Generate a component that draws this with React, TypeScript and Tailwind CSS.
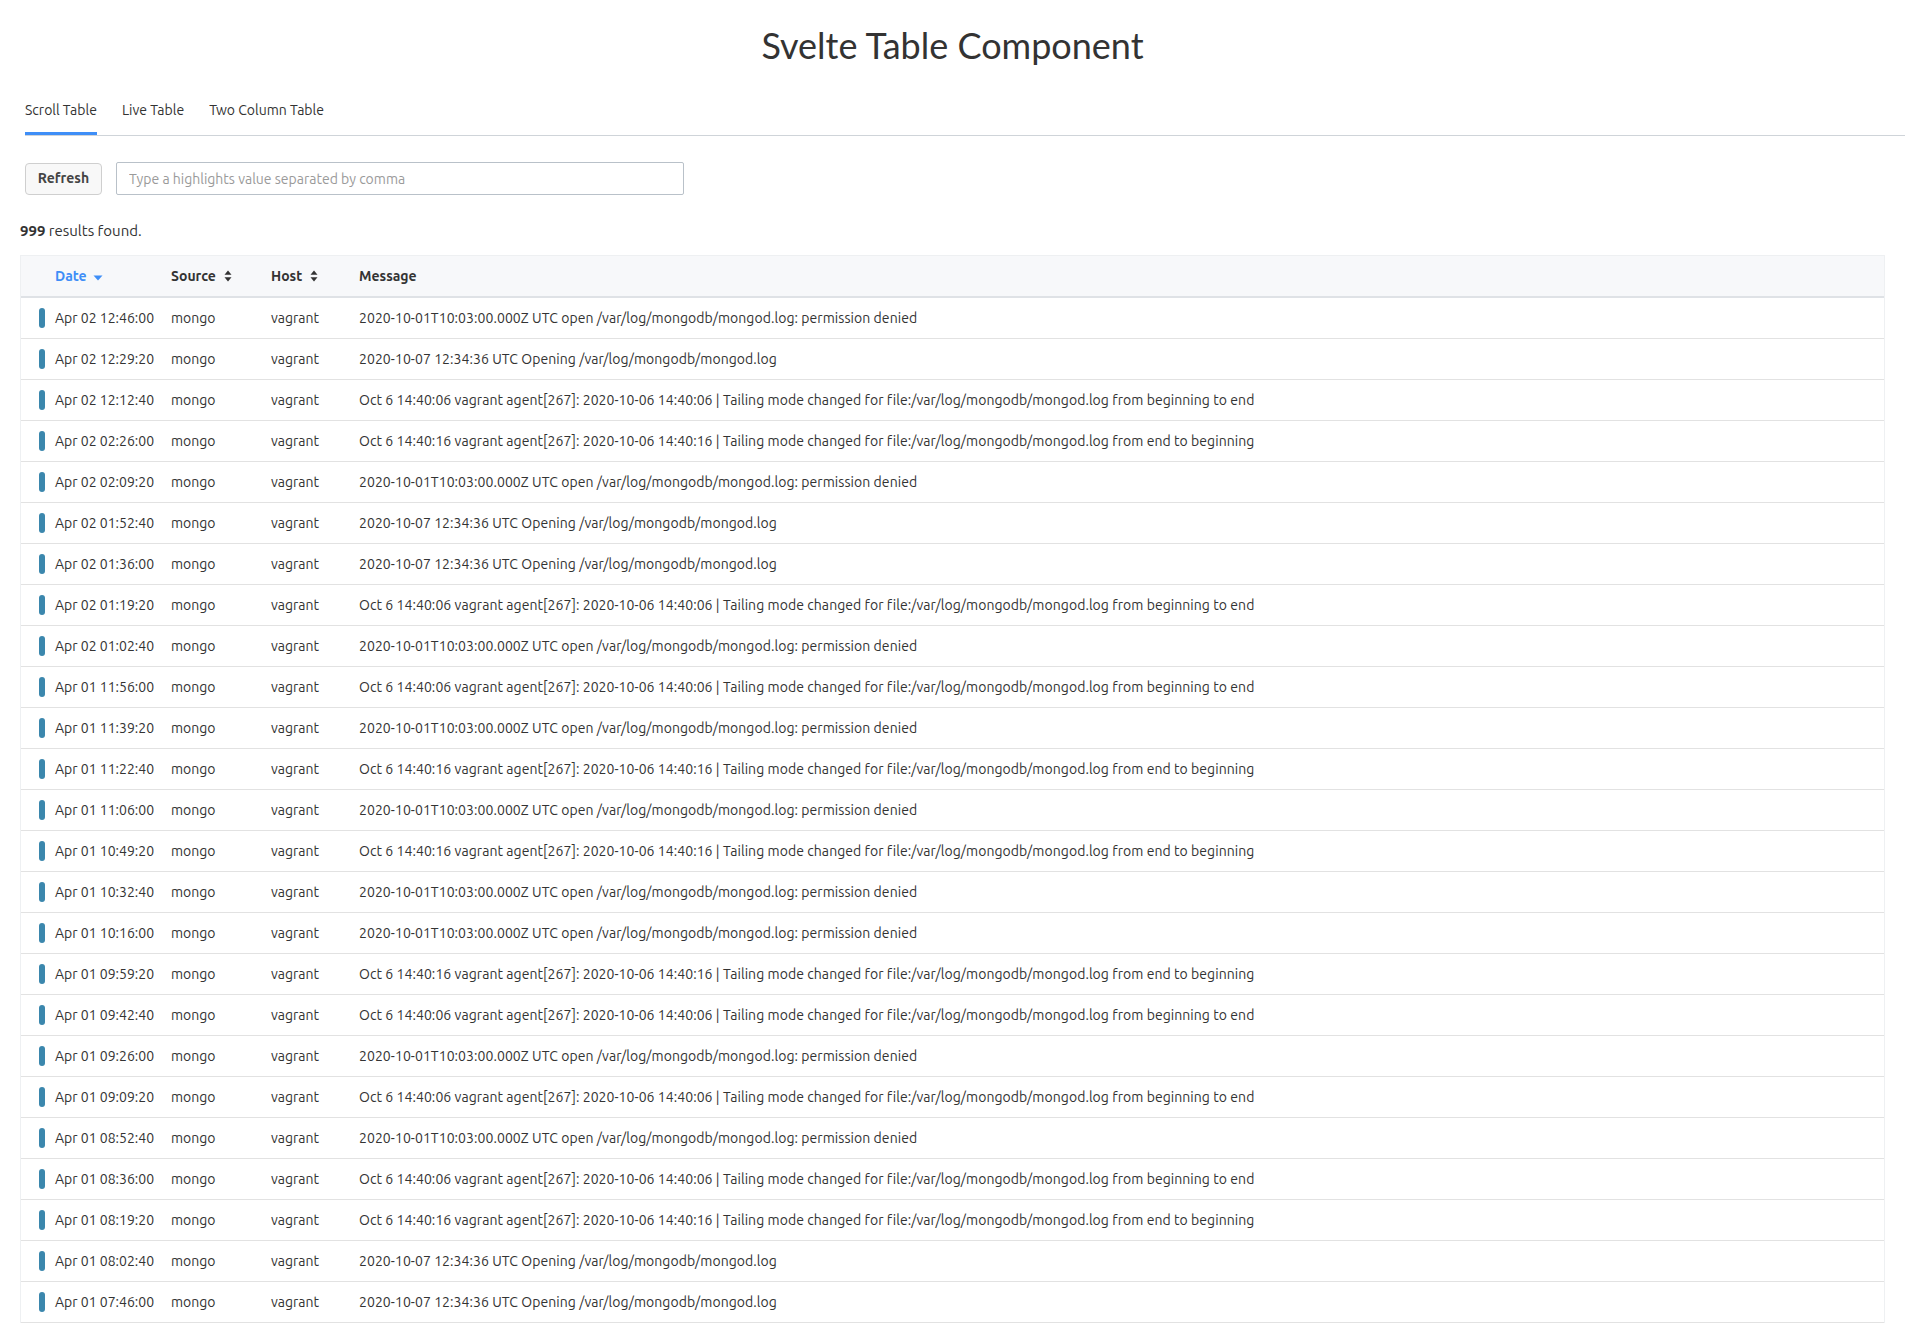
import { useState } from 'react';

type Row = { date: string; source: string; host: string; message: string };

const MSG_OPEN_DENIED =
  '2020-10-01T10:03:00.000Z UTC open /var/log/mongodb/mongod.log: permission denied';
const MSG_OPENING = '2020-10-07 12:34:36 UTC Opening /var/log/mongodb/mongod.log';
const MSG_TAIL_END =
  'Oct 6 14:40:06 vagrant agent[267]: 2020-10-06 14:40:06 | Tailing mode changed for file:/var/log/mongodb/mongod.log from beginning to end';
const MSG_TAIL_BEGIN =
  'Oct 6 14:40:16 vagrant agent[267]: 2020-10-06 14:40:16 | Tailing mode changed for file:/var/log/mongodb/mongod.log from end to beginning';

// fechas y mensajes tal cual salen en la captura
const entries: [string, string][] = [
  ['Apr 02 12:46:00', MSG_OPEN_DENIED],
  ['Apr 02 12:29:20', MSG_OPENING],
  ['Apr 02 12:12:40', MSG_TAIL_END],
  ['Apr 02 02:26:00', MSG_TAIL_BEGIN],
  ['Apr 02 02:09:20', MSG_OPEN_DENIED],
  ['Apr 02 01:52:40', MSG_OPENING],
  ['Apr 02 01:36:00', MSG_OPENING],
  ['Apr 02 01:19:20', MSG_TAIL_END],
  ['Apr 02 01:02:40', MSG_OPEN_DENIED],
  ['Apr 01 11:56:00', MSG_TAIL_END],
  ['Apr 01 11:39:20', MSG_OPEN_DENIED],
  ['Apr 01 11:22:40', MSG_TAIL_BEGIN],
  ['Apr 01 11:06:00', MSG_OPEN_DENIED],
  ['Apr 01 10:49:20', MSG_TAIL_BEGIN],
  ['Apr 01 10:32:40', MSG_OPEN_DENIED],
  ['Apr 01 10:16:00', MSG_OPEN_DENIED],
  ['Apr 01 09:59:20', MSG_TAIL_BEGIN],
  ['Apr 01 09:42:40', MSG_TAIL_END],
  ['Apr 01 09:26:00', MSG_OPEN_DENIED],
  ['Apr 01 09:09:20', MSG_TAIL_END],
  ['Apr 01 08:52:40', MSG_OPEN_DENIED],
  ['Apr 01 08:36:00', MSG_TAIL_END],
  ['Apr 01 08:19:20', MSG_TAIL_BEGIN],
  ['Apr 01 08:02:40', MSG_OPENING],
  ['Apr 01 07:46:00', MSG_OPENING],
];

const rows: Row[] = entries.map(([date, message]) => ({
  date,
  source: 'mongo',
  host: 'vagrant',
  message,
}));

const tabs = ['Scroll Table', 'Live Table', 'Two Column Table'];

function SortIcon() {
  return (
    <svg width="8" height="12" viewBox="0 0 8 12" className="ml-[8px] shrink-0">
      <path d="M4 0.5 L7.5 4.8 H0.5 Z" fill="#333" />
      <path d="M4 11.5 L7.5 7.2 H0.5 Z" fill="#333" />
    </svg>
  );
}

function SortDownIcon() {
  return (
    <svg width="10" height="6" viewBox="0 0 10 6" className="ml-[6px] mt-[3px] shrink-0">
      <path d="M0.5 0.5 H9.5 L5 5.5 Z" fill="#3e8ef7" />
    </svg>
  );
}

export default function App() {
  const [activeTab, setActiveTab] = useState('Scroll Table');
  const [highlights, setHighlights] = useState('');

  return (
    <div className="min-h-screen bg-white font-['Ubuntu','Roboto',sans-serif] text-[14px] text-[#333]">
      <h1 className="pt-[24px] text-center font-['Lato',sans-serif] text-[36px] leading-[43px] font-normal text-[#333]">
        Svelte Table Component
      </h1>

      {/* Pestañas */}
      <div className="mt-[33px] ml-[25px] flex gap-[25px] border-b border-[#cfd4d9]">
        {tabs.map((tab) => (
          <button
            key={tab}
            type="button"
            onClick={() => setActiveTab(tab)}
            className={
              tab === activeTab
                ? 'border-b-[3px] border-[#3e8ef7] pb-[12px] text-[14px] leading-[20px] text-[#333]'
                : 'border-b-[3px] border-transparent pb-[12px] text-[14px] leading-[20px] text-[#333]'
            }
          >
            {tab}
          </button>
        ))}
      </div>

      {/* Controles */}
      <div className="mt-[26px] ml-[25px] flex items-center gap-[14px]">
        <button
          type="button"
          className="h-[32px] w-[77px] rounded-[4px] border border-[#cfcfcf] bg-[#f8f8f8] text-[14px] font-bold text-[#444]"
        >
          Refresh
        </button>
        <input
          value={highlights}
          onChange={(e) => setHighlights(e.target.value)}
          placeholder="Type a highlights value separated by comma"
          className="h-[33px] w-[568px] rounded-[2px] border border-[#b9c1c9] px-[12px] text-[14px] text-[#333] placeholder:text-[#9a9a9a] focus:outline-none"
        />
      </div>

      <p className="mt-[26px] ml-[20px] text-[15px] leading-[20px]">
        <span className="font-bold">999</span> results found.
      </p>

      {/* Tabla */}
      <div className="mt-[14px] mx-[20px] border border-[#eef0f2]">
        <div className="grid h-[42px] grid-cols-[150px_100px_88px_1fr] items-center border-b-2 border-[#dfe2e6] bg-[#f7f8fa] font-bold">
          <div className="flex items-center pl-[34px] text-[#3e8ef7]">
            Date
            <SortDownIcon />
          </div>
          <div className="flex items-center">
            Source
            <SortIcon />
          </div>
          <div className="flex items-center">
            Host
            <SortIcon />
          </div>
          <div>Message</div>
        </div>

        {rows.map((row, i) => (
          <div
            key={i}
            className="grid h-[41px] grid-cols-[150px_100px_88px_1fr] items-center border-b border-[#e2e2e2]"
          >
            <div className="flex items-center pl-[18px]">
              <span className="mr-[10px] h-[20px] w-[6px] rounded-[3px] bg-[#3b87ad]" />
              {row.date}
            </div>
            <div>{row.source}</div>
            <div>{row.host}</div>
            <div className="whitespace-nowrap tracking-[0.06px]">{row.message}</div>
          </div>
        ))}
      </div>
    </div>
  );
}
